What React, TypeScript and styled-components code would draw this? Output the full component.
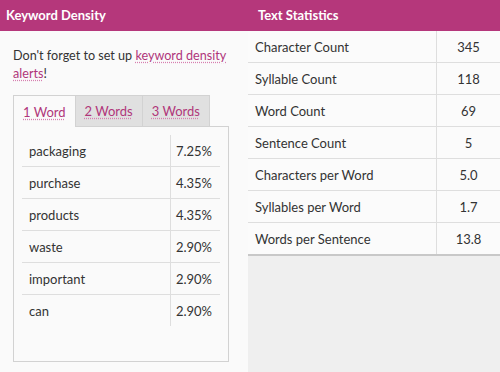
import styled, { createGlobalStyle } from 'styled-components';
import { useState } from 'react';

const GlobalStyle = createGlobalStyle`
   html, body {
      margin: 0;
      padding: 0;
      background: #fafafa;
   }
   body {
      font-family: Lato, 'Liberation Sans', sans-serif;
      font-size: 13px;
      color: #333;
   }
`;

const densities: Record<string, [string, string][]> = {
   '1 Word': [
      ['packaging', '7.25%'],
      ['purchase', '4.35%'],
      ['products', '4.35%'],
      ['waste', '2.90%'],
      ['important', '2.90%'],
      ['can', '2.90%'],
   ],
   '2 Words': [],
   '3 Words': [],
};

const stats: [string, string][] = [
   ['Character Count', '345'],
   ['Syllable Count', '118'],
   ['Word Count', '69'],
   ['Sentence Count', '5'],
   ['Characters per Word', '5.0'],
   ['Syllables per Word', '1.7'],
   ['Words per Sentence', '13.8'],
];

const App = () => {
   const [tab, setTab] = useState('1 Word');

   return (
      <>
         <GlobalStyle />
         <PageStyle>
            {/* keyword density */}
            <PanelStyle>
               <HeaderStyle $pad={6}>Keyword Density</HeaderStyle>
               <NoteStyle>
                  Don't forget to set up <LinkStyle href='#'>keyword density alerts</LinkStyle>!
               </NoteStyle>
               <TabsStyle>
                  {Object.keys(densities).map((name) => (
                     <TabStyle key={name} $active={name === tab} onClick={() => setTab(name)}>
                        <span>{name}</span>
                     </TabStyle>
                  ))}
                  <TabFillStyle />
               </TabsStyle>
               <TabBodyStyle>
                  <DensityTableStyle>
                     <tbody>
                        {densities[tab].map(([word, pct]) => (
                           <tr key={word}>
                              <td>{word}</td>
                              <td>{pct}</td>
                           </tr>
                        ))}
                     </tbody>
                  </DensityTableStyle>
               </TabBodyStyle>
            </PanelStyle>
            {/* text statistics */}
            <StatsPanelStyle>
               <HeaderStyle $pad={10}>Text Statistics</HeaderStyle>
               <StatsTableStyle>
                  <tbody>
                     {stats.map(([label, value]) => (
                        <tr key={label}>
                           <td>{label}</td>
                           <td>{value}</td>
                        </tr>
                     ))}
                  </tbody>
               </StatsTableStyle>
            </StatsPanelStyle>
         </PageStyle>
      </>
   );
};

const PageStyle = styled.div`
   display: grid;
   grid-template-columns: 248px 1fr;
   height: 372px;
   overflow: hidden;
`;

const PanelStyle = styled.div`
   background: #fafafa;
   display: flex;
   flex-direction: column;
`;

const StatsPanelStyle = styled.div`
   background: #efefef;
   display: flex;
   flex-direction: column;
`;

const HeaderStyle = styled.div<{ $pad: number }>`
   height: 31px;
   line-height: 31px;
   padding-left: ${(p) => p.$pad}px;
   background: #b5377b;
   color: #fff;
   font-weight: bold;
   font-size: 13px;
`;

const NoteStyle = styled.p`
   margin: 0;
   padding: 16px 13px 0;
   font-size: 12.6px;
   line-height: 18px;
   height: 48px;
`;

const LinkStyle = styled.a`
   color: #b0367a;
   text-decoration: underline dotted #d77fb0;
   text-underline-offset: 2px;
`;

const TabsStyle = styled.div`
   display: flex;
   margin: 0 19px 0 13px;
   height: 32px;
`;

const TabStyle = styled.div<{ $active: boolean }>`
   padding: 0 9px;
   display: flex;
   align-items: center;
   background: ${(p) => (p.$active ? '#fafafa' : '#e0e0e0')};
   border: 1px solid #d2d2d2;
   border-bottom: ${(p) => (p.$active ? 'none' : '1px solid #d2d2d2')};
   border-left-width: ${(p) => (p.$active ? 1 : 0)}px;
   cursor: pointer;

   span {
      color: #b0367a;
      text-decoration: underline dotted #d77fb0;
      text-underline-offset: 2px;
   }
`;

const TabFillStyle = styled.div`
   flex: 1;
   border-bottom: 1px solid #d2d2d2;
`;

const TabBodyStyle = styled.div`
   margin: 0 19px 0 13px;
   height: 226px;
   border: 1px solid #d2d2d2;
   border-top: none;
   padding: 8px 8px 0;
`;

const DensityTableStyle = styled.table`
   width: 198px;
   border-collapse: collapse;

   td {
      height: 31px;
      padding: 0;
      border-bottom: 1px solid #dedede;
   }
   tr:last-child td {
      border-bottom: none;
   }
   td:first-child {
      padding-left: 7px;
   }
   td:last-child {
      width: 41px;
      padding-right: 8px;
      text-align: right;
      border-left: 1px solid #dedede;
   }
`;

const StatsTableStyle = styled.table`
   width: 100%;
   border-collapse: collapse;
   background: #fbfbfb;
   border-bottom: 2px solid #c8c8c8;

   td {
      height: 31px;
      padding: 0;
      border-bottom: 1px solid #dedede;
   }
   tr:last-child td {
      border-bottom: none;
   }
   td:first-child {
      padding-left: 7px;
   }
   td:last-child {
      width: 63px;
      text-align: center;
      border-left: 1px solid #dedede;
   }
`;

export default App;
